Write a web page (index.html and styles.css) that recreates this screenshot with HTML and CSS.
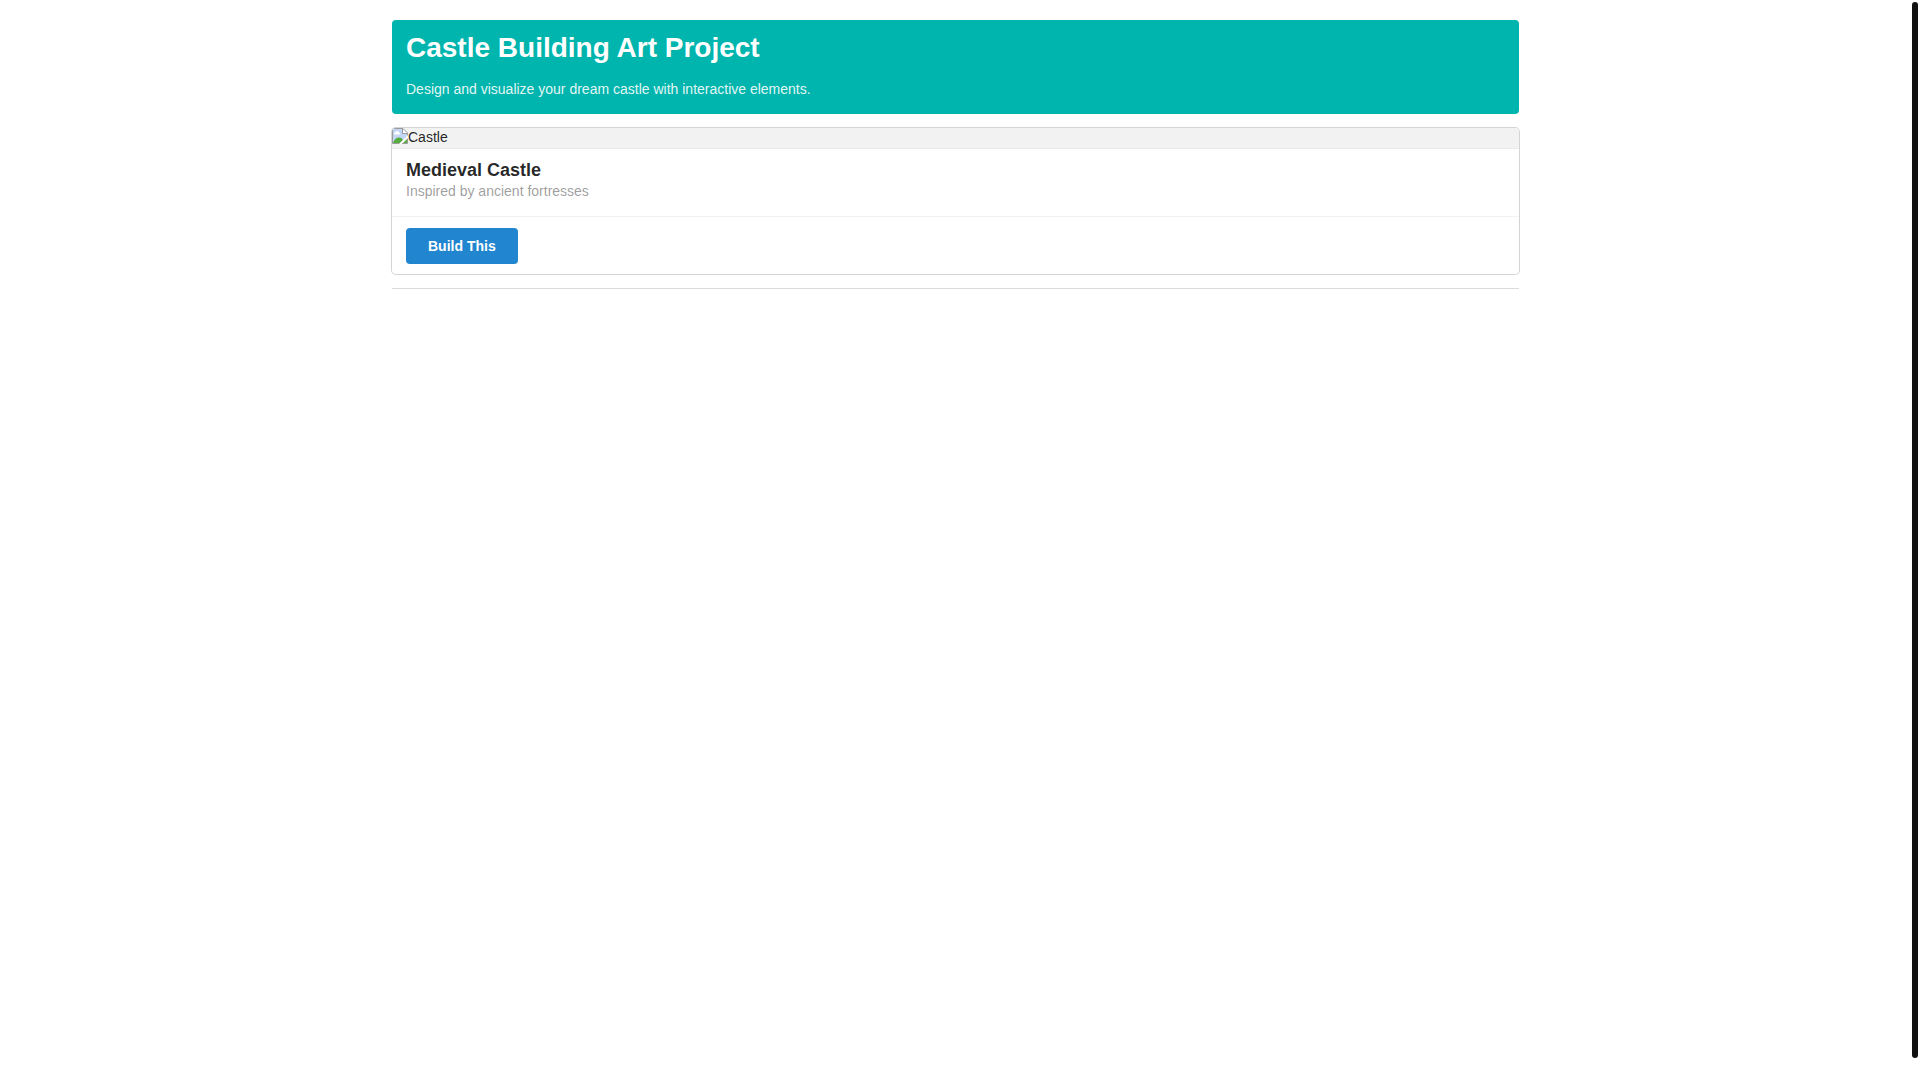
FILE: index.html
```html
<!DOCTYPE html>
<html lang="en">
<head>
  <meta charset="UTF-8">
  <meta name="viewport" content="width=device-width, initial-scale=1.0">
  <title>Castle Building Art Project</title>
  <link rel="stylesheet" href="styles.css">
</head>
<body>
<main class="container">
  <header class="banner">
    <h1>Castle Building Art Project</h1>
    <p>Design and visualize your dream castle with interactive elements.</p>
  </header>
  <div class="card">
    <div class="image">
      <svg width="16" height="16" viewBox="0 0 16 16" aria-hidden="true">
        <path d="M0.5 0.5H11L15.5 5V8L8 15.5H0.5Z" fill="#c2d5f7"/>
        <path d="M3 6.5a1.3 1.3 0 0 1 .5-2.5a2 2 0 0 1 3.6 .4a1.1 1.1 0 0 1 .3 2.1z" fill="#fff"/>
        <path d="M1 15C2 11.5 4.5 9.5 7 9.5C9 9.5 10.5 10.5 11 12L8 15Z" fill="#55ad3d"/>
        <path d="M11 15L15 11V15Z" fill="#55ad3d"/>
        <path d="M8 15.5H0.5V0.5H11L15.5 5V8" fill="none" stroke="#9b9b9b"/>
        <path d="M10.5 1V5.5H15.5" fill="#fff" stroke="#9b9b9b"/>
        <path d="M10 15.5H15.5V10.5" fill="none" stroke="#9b9b9b"/>
        <path d="M7 16L16 7V9.5L9.5 16Z" fill="#fff"/>
      </svg>
      <span>Castle</span>
    </div>
    <div class="content">
      <h2>Medieval Castle</h2>
      <div class="meta">Inspired by ancient fortresses</div>
    </div>
    <div class="extra">
      <button type="button">Build This</button>
    </div>
  </div>
  <hr>
</main>
<div class="scrollbar" aria-hidden="true"></div>
</body>
</html>
```
FILE: styles.css
```css
* {
  box-sizing: border-box;
}
body {
  margin: 0;
  padding: 20px 9px 0 0;
  font-family: "Liberation Sans", Arial, sans-serif;
  font-size: 14px;
  line-height: 1.4285;
  color: rgba(0,0,0,0.87);
  background: #fff;
}
.container {
  max-width: 1127px;
  margin: 0 auto;
}
.banner {
  padding: 10px 14px 14px;
  border-radius: 4px;
  background: #00b5ad;
  color: rgba(255,255,255,0.9);
}
h1 {
  margin: 0 0 14px;
  font-size: 28px;
  line-height: 36px;
  color: #fff;
}
p {
  margin: 0;
}
.card {
  margin: 14px 0;
  border-radius: 4px;
  box-shadow: 0 0 0 1px #d4d4d5;
  overflow: hidden;
}
.image {
  display: flex;
  height: 20px;
  background: #f2f2f2;
}
.content {
  padding: 10px 14px 14px;
  border-top: 1px solid rgba(34,36,38,0.1);
}
h2 {
  margin: 0;
  font-size: 18px;
  line-height: 23px;
  color: rgba(0,0,0,0.85);
}
.meta {
  color: rgba(0,0,0,0.4);
}
.extra {
  padding: 11px 14px 10px;
  border-top: 1px solid rgba(0,0,0,0.05);
}
button {
  display: block;
  padding: 11px 22px;
  border: none;
  border-radius: 4px;
  background: #2185d0;
  color: #fff;
  font-family: inherit;
  font-size: 14px;
  font-weight: bold;
  line-height: 14px;
  cursor: pointer;
}
button:hover {
  background: #1678c2;
}
hr {
  margin: 0;
  border: none;
  border-top: 1px solid #dcdcdd;
}
.scrollbar {
  position: fixed;
  top: 2px;
  right: 2px;
  bottom: 22px;
  width: 6px;
  border-radius: 3px;
  background: #111;
}
```
